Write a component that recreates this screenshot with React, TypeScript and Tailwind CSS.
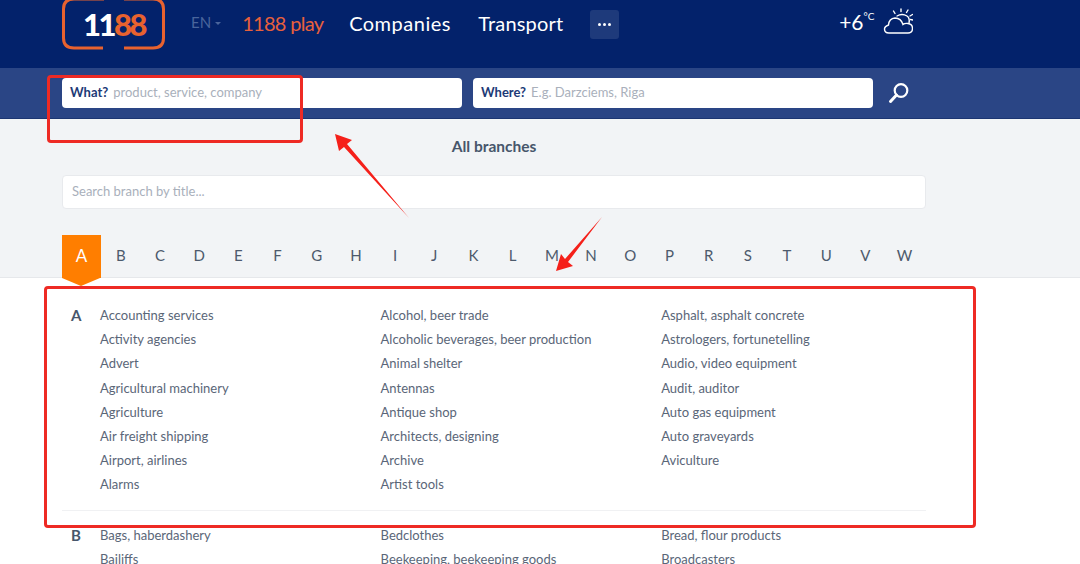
const letters = ['A', 'B', 'C', 'D', 'E', 'F', 'G', 'H', 'I', 'J', 'K', 'L', 'M', 'N', 'O', 'P', 'R', 'S', 'T', 'U', 'V', 'W'];

const groups = [
  {
    letter: 'A',
    columns: [
      ['Accounting services', 'Activity agencies', 'Advert', 'Agricultural machinery', 'Agriculture', 'Air freight shipping', 'Airport, airlines', 'Alarms'],
      ['Alcohol, beer trade', 'Alcoholic beverages, beer production', 'Animal shelter', 'Antennas', 'Antique shop', 'Architects, designing', 'Archive', 'Artist tools'],
      ['Asphalt, asphalt concrete', 'Astrologers, fortunetelling', 'Audio, video equipment', 'Audit, auditor', 'Auto gas equipment', 'Auto graveyards', 'Aviculture'],
    ],
  },
  {
    letter: 'B',
    columns: [
      ['Bags, haberdashery', 'Bailiffs'],
      ['Bedclothes', 'Beekeeping, beekeeping goods'],
      ['Bread, flour products', 'Broadcasters'],
    ],
  },
];

function Logo() {
  return (
    <div className="relative h-[68px] w-[103px] shrink-0">
      <svg className="absolute left-0 top-0" width="103" height="68" viewBox="0 0 103 68" fill="none" stroke="#e8622f" strokeWidth="3">
        <path d="M42 -1 H12 Q1.5 -1 1.5 9 V38 Q1.5 48 12 48 H41" />
        <path d="M62 -1 H91 Q101.5 -1 101.5 9 V38 Q101.5 48 91 48 H62" />
      </svg>
      <div className="absolute left-[21px] top-[7px] text-[31px] font-black leading-[34px] tracking-[-2.5px] text-white">
        11<span className="text-[#e8622f]">88</span>
      </div>
    </div>
  );
}

function Weather() {
  return (
    <svg width="30" height="26" viewBox="0 0 30 26" fill="none" stroke="white" strokeWidth="1.4" strokeLinecap="round">
      <path d="M6 25 H25 Q29.5 25 29.5 20.5 Q29.5 16 25 15.5 Q22 15 20 16.5 Q18 10 12 10 Q6 10.5 5.5 17 Q1.5 18.5 1.5 21 Q1.5 25 6 25 Z" />
      <path d="M14 8 Q19 5 24 8 Q27 10 26 15" />
      <path d="M10.5 3 L12 5.5 M18 1 V3.5 M25 2 L23.5 4.5 M29.5 6.5 L27 8 M30 12 L27.5 11.5" />
    </svg>
  );
}

function SearchIcon() {
  return (
    <svg width="22" height="22" viewBox="0 0 22 22" fill="none" stroke="white" strokeLinecap="round">
      <circle cx="13" cy="8.5" r="6.3" strokeWidth="2.2" />
      <path d="M8.5 13 L2.5 19.5" strokeWidth="3" />
    </svg>
  );
}

function SearchField({ label, placeholder }: { label: string; placeholder: string }) {
  return (
    <div className="flex h-[30px] w-[400px] items-center gap-[5px] rounded-sm bg-white px-2 text-[13px]">
      <span className="font-bold text-[#1d3a76]">{label}</span>
      <span className="text-[#a9b0bb]">{placeholder}</span>
    </div>
  );
}

export default function App() {
  return (
    <div className="relative h-[564px] w-[1080px] overflow-hidden bg-white font-['Lato',sans-serif] text-[#5a6678]">
      <header className="flex h-[68px] items-start bg-[#03226b] pl-[62px]">
        <Logo />
        <div className="ml-[26px] mt-[11px] flex items-center gap-1 text-[15px] text-[#4a659c]">
          EN
          <span className="mt-0.5 h-0 w-0 border-x-[3px] border-t-[3px] border-x-transparent border-t-[#4a659c]" />
        </div>
        <nav className="ml-[21px] mt-[9px] flex text-[20px] leading-[28px] text-white">
          <span className="w-[107px] tracking-[-0.7px] text-[#e8603c]">1188 play</span>
          <span className="w-[129px] tracking-[0.5px]">Companies</span>
          <span className="w-[112px] tracking-[0.2px]">Transport</span>
        </nav>
        <div className="mt-[10px] flex h-[29px] w-[29px] items-center justify-center gap-[2px] rounded-[3px] bg-[#1e3a7b]">
          <span className="h-[3px] w-[3px] rounded-full bg-white" />
          <span className="h-[3px] w-[3px] rounded-full bg-white" />
          <span className="h-[3px] w-[3px] rounded-full bg-white" />
        </div>
        <div className="ml-[220px] mt-[7px] flex text-[21px] leading-[30px] text-white">
          +6<span className="mt-[-1px] text-[10px] leading-[20px]">°C</span>
        </div>
        <div className="ml-[9px] mt-[8px]">
          <Weather />
        </div>
      </header>

      <div className="flex h-[51px] items-center gap-[11px] border-b border-[#1c3672] bg-[#2a4585] pl-[62px]">
        <SearchField label="What?" placeholder="product, service, company" />
        <SearchField label="Where?" placeholder="E.g. Darzciems, Riga" />
        <div className="ml-[4px]">
          <SearchIcon />
        </div>
      </div>

      <div className="h-[159px] border-b border-[#e6e8eb] bg-[#f2f4f6] pl-[62px]">
        <div className="w-[864px]">
          <h1 className="pt-[17px] text-center text-[15.5px] font-bold leading-[20px] text-[#47566b]">All branches</h1>
          <div className="mt-[19px] flex h-[34px] items-center rounded-sm border border-[#e8eaed] bg-white px-[9px] text-[13px] text-[#a9b0bb]">
            Search branch by title...
          </div>
          <div className="mt-[26px] flex">
            {letters.map((l) => (
              <div
                key={l}
                className={
                  l === 'A'
                    ? 'relative flex h-[43px] w-[39.2px] items-center justify-center bg-[#ff7e00] pb-0.5 text-[17px] text-white'
                    : 'flex h-[43px] w-[39.2px] items-center justify-center pb-0.5 text-[15px] text-[#4d5a6c]'
                }
              >
                {l}
                {l === 'A' && (
                  <span className="absolute left-0 top-[43px] h-0 w-0 border-x-[19.6px] border-t-[8px] border-x-transparent border-t-[#ff7e00]" />
                )}
              </div>
            ))}
          </div>
        </div>
      </div>

      <main className="ml-[62px] w-[864px] pt-[25px]">
        {groups.map((group) => (
          <section key={group.letter} className="mb-[12px] flex border-b border-[#f0f1f3] pb-[13px]">
            <div className="w-[38px] pl-[9px] text-[15px] font-bold leading-[24.2px] text-[#47566b]">{group.letter}</div>
            <div className="grid flex-1 grid-cols-[280.6px_280.6px_1fr]">
              {group.columns.map((col, i) => (
                <ul key={i} className="text-[13px] leading-[24.2px]">
                  {col.map((item) => (
                    <li key={item}>{item}</li>
                  ))}
                </ul>
              ))}
            </div>
          </section>
        ))}
      </main>

      {/* annotations on top of the screenshot */}
      <div className="absolute left-[47px] top-[75px] h-[68px] w-[256px] rounded-sm border-[3px] border-[#ee2a24]" />
      <div className="absolute left-[44px] top-[286px] h-[242px] w-[932px] rounded-sm border-[3px] border-[#ee2a24]" />
      <svg className="absolute left-0 top-0" width="1080" height="564" viewBox="0 0 1080 564">
        <path d="M335 134 L352 140 L347 144 L409 218 L344 147 L339 151 Z" fill="#f5201a" />
        <path d="M556 271 L561 254 L565 259 L602 217 L568 262 L573 266 Z" fill="#f5201a" />
      </svg>
    </div>
  );
}
